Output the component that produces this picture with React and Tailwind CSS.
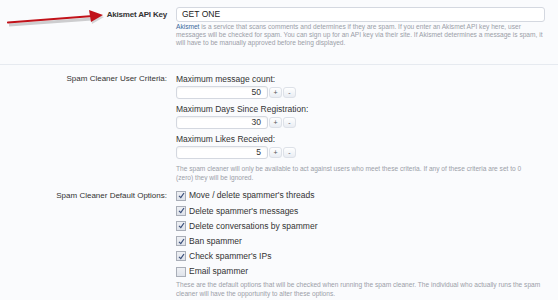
import React from "react";

const FONT = { fontFamily: '"Liberation Sans", Arial, sans-serif' };

const Spinner = ({ label, value }) => {
  return (
    <div className="flex flex-col">
      <div className="h-[12px] text-[8.5px] leading-[12px] text-[#333]">{label}</div>
      <div className="mt-[1px] flex items-center">
        <div className="h-[13px] w-[92px] rounded-[3px] border border-[#d4d8e0] bg-white pr-[6px] text-right text-[8.5px] leading-[11px] text-[#333] shadow-[inset_0_1px_2px_rgba(0,0,0,0.06)]">
          {value}
        </div>
        <button className="ml-[1px] flex h-[11px] w-[13px] items-center justify-center rounded-[3px] border border-[#dde1e8] bg-gradient-to-b from-white to-[#e9edf3] text-[7px] leading-none text-[#555]">
          +
        </button>
        <button className="ml-[1px] flex h-[11px] w-[13px] items-center justify-center rounded-[3px] border border-[#dde1e8] bg-gradient-to-b from-white to-[#e9edf3] text-[7px] leading-none text-[#555]">
          -
        </button>
      </div>
    </div>
  );
};

const Check = ({ checked, label }) => {
  return (
    <div className="flex h-[15.2px] items-center">
      <span className="flex h-[10px] w-[10px] items-center justify-center border border-[#a9aeb8] bg-gradient-to-b from-[#eef0f4] to-[#dfe3ea]">
        {checked && (
          <svg width="7" height="7" viewBox="0 0 7 7">
            <path d="M1 3.8 L2.8 5.6 L6 1" fill="none" stroke="#3b4f7a" strokeWidth="1.2" />
          </svg>
        )}
      </span>
      <span className="ml-[3px] text-[8.5px] leading-none text-[#333]">{label}</span>
    </div>
  );
};

const Row = ({ label, bold, children, labelClass }) => {
  return (
    <div className="flex">
      <div
        className={
          "w-[168px] shrink-0 pr-[1px] text-right leading-[12px] text-[#333] " +
          (bold ? "font-bold text-[8px] tracking-[-0.2px] " : "text-[8px] ") +
          (labelClass || "")
        }
      >
        {label}
      </div>
      <div className="ml-[8px] flex-1 pr-[13px]">{children}</div>
    </div>
  );
};

export default function App() {
  return (
    <div className="relative h-[300px] w-[558px] overflow-hidden bg-[#fafbfd]" style={FONT}>
      {/* red arrow pointing at the key field */}
      <svg className="absolute left-[5px] top-[9px]" width="104" height="18" viewBox="0 0 104 18">
        <path d="M3 14 L86 8" stroke="rgba(0,0,0,0.18)" strokeWidth="3" transform="translate(1,2)" />
        <path d="M3 13.5 L88 7" stroke="#c1121a" strokeWidth="2.2" strokeLinecap="round" />
        <path d="M84 1 L98 6 L86 13 Z" fill="rgba(0,0,0,0.15)" transform="translate(1,2)" />
        <path d="M84 1 L98 6 L86 13 Z" fill="#c1121a" />
      </svg>

      <div className="pt-[7px]">
        <Row label="Akismet API Key" bold labelClass="pt-[2px]">
          <div className="h-[15px] w-full rounded-[3px] border border-[#d4d8e0] bg-white pl-[5px] text-[8.5px] leading-[13px] text-[#222]">
            GET ONE
          </div>
        </Row>
        <div className="ml-[176px] mt-[1px] max-w-[369px] text-[6.6px] leading-[8px] text-[#9aa0a8]">
          <span className="text-[#3a6a9c]">Akismet</span> is a service that scans comments and determines if they are spam. If you enter an Akismet API key here, user messages will be checked for spam. You can sign up for an API key via their site. If Akismet determines a message is spam, it will have to be manually approved before being displayed.
        </div>
      </div>

      <div className="mt-[17px] h-px bg-[#e6eaf0]" />

      <div className="pt-[8px]">
        <Row label="Spam Cleaner User Criteria:">
          <div className="flex flex-col gap-[4px]">
            <Spinner label="Maximum message count:" value="50" />
            <Spinner label="Maximum Days Since Registration:" value="30" />
            <Spinner label="Maximum Likes Received:" value="5" />
          </div>
          <div className="mt-[5px] max-w-[356px] text-[6.6px] leading-[9px] text-[#9aa0a8]">
            The spam cleaner will only be available to act against users who meet these criteria. If any of these criteria are set to 0 (zero) they will be ignored.
          </div>
        </Row>
      </div>

      <div className="pt-[6px]">
        <Row label="Spam Cleaner Default Options:" labelClass="pt-[2px]">
          <div className="flex flex-col">
            <Check checked label="Move / delete spammer's threads" />
            <Check checked label="Delete spammer's messages" />
            <Check checked label="Delete conversations by spammer" />
            <Check checked label="Ban spammer" />
            <Check checked label="Check spammer's IPs" />
            <Check label="Email spammer" />
          </div>
          <div className="mt-[1px] text-[6.6px] leading-[9px] text-[#9aa0a8]">
            These are the default options that will be checked when running the spam cleaner. The individual who actually runs the spam cleaner will have the opportunity to alter these options.
          </div>
        </Row>
      </div>
    </div>
  );
}
